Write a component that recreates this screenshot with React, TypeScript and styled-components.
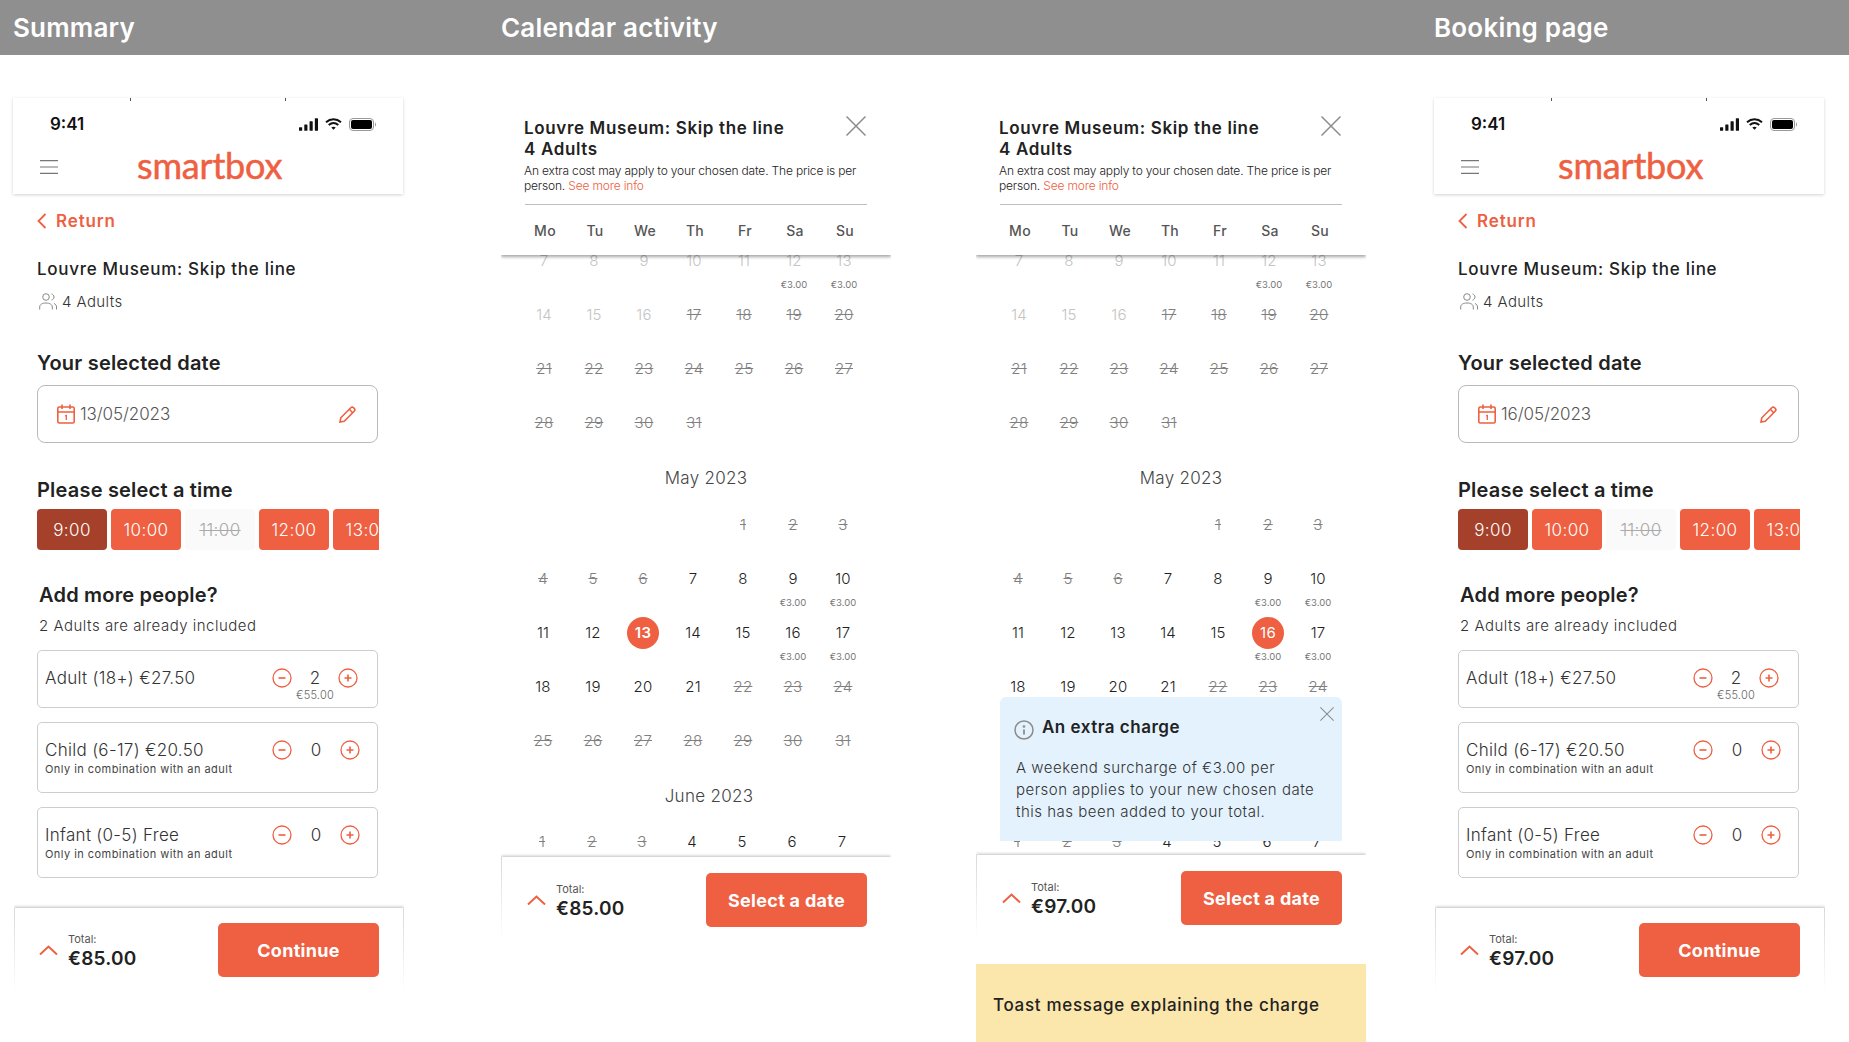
import React from "react";
import styled, { createGlobalStyle } from "styled-components";

const ORANGE = "#ee6041";

const Global = createGlobalStyle`
  html, body { margin: 0; padding: 0; background: #fff; }
  body { font-family: Inter, "Liberation Sans", sans-serif; color: #222; overflow: hidden; }
  * { box-sizing: border-box; }
`;

const COLUMNS = "13px 390px 98px 390px 85px 390px 68px 390px 25px";

const Page = styled.div`
  width: 1849px;
  height: 1042px;
  overflow: hidden;
`;
const HeaderBar = styled.header`
  height: 55px;
  background: #8f8f8f;
  display: grid;
  grid-template-columns: ${COLUMNS};
  align-items: center;
`;
const HeaderTitle = styled.h1<{ $col: number }>`
  grid-column: ${(p) => p.$col};
  margin: 0;
  white-space: nowrap;
  color: #fff;
  font-size: 26px;
  font-weight: 600;
  letter-spacing: 0.2px;
`;
const Board = styled.main`
  display: grid;
  grid-template-columns: ${COLUMNS};
  padding-top: 43px;
`;
const Column = styled.section<{ $col: number }>`
  grid-column: ${(p) => p.$col};
  width: 390px;
  position: relative;
`;

/* ---- phone header ---- */
const TopCard = styled.div`
  position: relative;
  height: 96px;
  background: #fff;
  box-shadow: 0 1px 3px rgba(0, 0, 0, 0.18);
  &::before, &::after {
    content: "";
    position: absolute;
    top: 0;
    width: 1px;
    height: 3px;
    background: #555;
  }
  &::before { left: 117px; }
  &::after { left: 272px; }
`;
const StatusBar = styled.div`
  height: 52px;
  padding: 0 27px 0 37px;
  display: flex;
  align-items: center;
  justify-content: space-between;
`;
const Clock = styled.span`
  font-size: 17px;
  font-weight: 600;
  color: #111;
`;
const StatusIcons = styled.div`
  display: flex;
  align-items: center;
  gap: 7px;
`;
const NavBar = styled.div`
  height: 44px;
  padding-left: 27px;
  display: flex;
  align-items: center;
  gap: 79px;
  margin-top: -5px;
`;
const Logo = styled.span`
  font-family: Lato, sans-serif;
  font-size: 36px;
  line-height: 40px;
  font-weight: 400;
  color: ${ORANGE};
  letter-spacing: -0.2px;
  -webkit-text-stroke: 0.5px ${ORANGE};
  margin-top: -4px;
`;

/* ---- summary body ---- */
const Content = styled.div`
  padding: 17px 25px 0 24px;
`;
const ReturnLink = styled.div`
  display: flex;
  align-items: center;
  gap: 9px;
  height: 20px;
  color: ${ORANGE};
  font-size: 17px;
  font-weight: 600;
  letter-spacing: 0.85px;
`;
const ProductTitle = styled.div`
  margin-top: 27px;
  font-size: 17px;
  line-height: 22px;
  font-weight: 500;
  letter-spacing: 0.7px;
  color: #222;
`;
const Guests = styled.div`
  margin-top: 11px;
  padding-left: 2px;
  display: flex;
  align-items: center;
  gap: 5px;
  height: 20px;
  font-size: 15px;
  font-weight: 300;
  letter-spacing: 0.4px;
  color: #333;
`;
const SectionTitle = styled.h2<{ $top: number; $inset?: number }>`
  margin: ${(p) => p.$top}px 0 0 ${(p) => p.$inset ?? 0}px;
  font-size: 20px;
  line-height: 24px;
  font-weight: 600;
  letter-spacing: 0.2px;
  color: #222;
`;
const DateBox = styled.div`
  margin-top: 10px;
  height: 58px;
  border: 1.5px solid #b9b9b9;
  border-radius: 8px;
  padding: 0 21px 0 19px;
  display: flex;
  align-items: center;
  gap: 5px;
  font-size: 17px;
  font-weight: 300;
  letter-spacing: -0.1px;
  color: #555;
`;
const DateValue = styled.span`
  flex: 1;
`;
const TimeStrip = styled.div`
  margin-top: 7px;
  width: 342px;
  display: flex;
  gap: 4px;
  overflow: hidden;
`;
const TimeChip = styled.div<{ $state: "picked" | "open" | "off" }>`
  flex: 0 0 70px;
  height: 41px;
  border-radius: 4px;
  display: flex;
  align-items: center;
  justify-content: center;
  font-size: 17px;
  font-weight: 300;
  letter-spacing: 0.4px;
  overflow: hidden;
  white-space: nowrap;
  background: ${(p) => (p.$state === "picked" ? "#a5412a" : p.$state === "open" ? ORANGE : "#fafafa")};
  color: ${(p) => (p.$state === "off" ? "#aaa" : "#fff")};
  text-decoration: ${(p) => (p.$state === "off" ? "line-through" : "none")};
`;
const AlreadyIncluded = styled.div`
  margin: 9px 0 0 2px;
  font-size: 15px;
  line-height: 20px;
  font-weight: 300;
  letter-spacing: 0.5px;
  color: #333;
`;
const PeopleList = styled.div`
  margin-top: 14px;
  display: flex;
  flex-direction: column;
  gap: 14px;
`;
const PersonRow = styled.div<{ $h: number }>`
  height: ${(p) => p.$h}px;
  border: 1px solid #cdcdcd;
  border-radius: 5px;
  padding: 16px 0 0 7px;
  display: flex;
  justify-content: space-between;
  align-items: flex-start;
`;
const PersonLabel = styled.div`
  font-size: 17px;
  line-height: 22px;
  font-weight: 300;
  letter-spacing: 0.3px;
  color: #333;
`;
const PersonNote = styled.div`
  margin-top: 2px;
  font-size: 11px;
  line-height: 12px;
  font-weight: 400;
  letter-spacing: 0.45px;
  color: #444;
`;
const Stepper = styled.div<{ $right: number }>`
  display: flex;
  align-items: flex-start;
  padding: 1px ${(p) => p.$right}px 0 0;
`;
const CountBox = styled.div<{ $w: number }>`
  width: ${(p) => p.$w}px;
  text-align: center;
  font-size: 17px;
  line-height: 20px;
  font-weight: 300;
  color: #333;
`;
const CountPrice = styled.div`
  margin-top: 1px;
  font-size: 11px;
  line-height: 12px;
  letter-spacing: 0.2px;
  color: #666;
`;

/* ---- total footer ---- */
const Footer = styled.div<{ $modal?: boolean }>`
  width: 390px;
  height: 83px;
  margin-left: ${(p) => (p.$modal ? 0 : 1)}px;
  position: relative;
  z-index: 1;
  background: #fff;
  padding: ${(p) => (p.$modal ? "16px 24px 0 25px" : "15px 24px 0 24px")};
  display: flex;
  align-items: flex-start;
  box-shadow: 0 -1px 3px rgba(0, 0, 0, 0.25);
  clip-path: inset(-6px 0 0 0);
  border-style: solid;
  border-width: 0 ${(p) => (p.$modal ? 0 : 1)}px 0 1px;
  border-image: linear-gradient(#d8d8d8, #fff) 1;
`;
const TotalBlock = styled.div`
  height: 54px;
  padding-top: 3px;
  margin-left: 10px;
  flex: 1;
  display: flex;
  flex-direction: column;
  justify-content: center;
`;
const TotalCaption = styled.div`
  font-size: 11px;
  line-height: 14px;
  color: #555;
`;
const TotalAmount = styled.div`
  font-size: 19px;
  line-height: 26px;
  font-weight: 600;
  letter-spacing: 0.25px;
  color: #222;
`;
const CTA = styled.div`
  width: 161px;
  height: 54px;
  border-radius: 5px;
  background: ${ORANGE};
  color: #fff;
  display: flex;
  align-items: center;
  justify-content: center;
  font-size: 18px;
  font-weight: 700;
  letter-spacing: 0.3px;
`;
const ChevronWrap = styled.div`
  height: 54px;
  display: flex;
  align-items: center;
`;

/* ---- calendar ---- */
const ModalHead = styled.div`
  position: relative;
  z-index: 1;
  height: 157px;
  background: #fff;
  padding: 20px 24px 0 23px;
  box-shadow: 0 2px 3px rgba(0, 0, 0, 0.35);
  clip-path: inset(0 0 -8px 0);
`;
const ModalTitle = styled.div`
  font-size: 17px;
  line-height: 21px;
  font-weight: 600;
  letter-spacing: 0.65px;
  color: #222;
`;
const CloseButton = styled.div`
  position: absolute;
  top: 18px;
  right: 25px;
  width: 20px;
  height: 20px;
`;
const ModalNote = styled.div`
  margin-top: 3px;
  font-size: 12px;
  line-height: 15px;
  font-weight: 300;
  letter-spacing: -0.17px;
  color: #222;
  white-space: nowrap;
`;
const InfoLink = styled.span`
  color: ${ORANGE};
`;
const Rule = styled.div`
  margin: 11px 0 0 1px;
  height: 1px;
  background: #bfbfbf;
`;
const WeekHead = styled.div`
  margin: 17px 0 0 -4px;
  width: 350px;
  display: grid;
  grid-template-columns: repeat(7, 50px);
  font-size: 14px;
  line-height: 18px;
  font-weight: 500;
  letter-spacing: 0.3px;
  color: #555;
  text-align: center;
`;
const ScrollArea = styled.div<{ $h: number }>`
  height: ${(p) => p.$h}px;
  overflow: hidden;
`;
const ScrollInner = styled.div`
  margin-top: -4px;
`;
const MonthTitle = styled.div<{ $shift: number; $gap: number }>`
  width: 350px;
  margin-left: ${(p) => p.$shift}px;
  margin-bottom: ${(p) => p.$gap}px;
  height: 22px;
  line-height: 22px;
  text-align: center;
  font-size: 17px;
  font-weight: 300;
  letter-spacing: 0.3px;
  color: #444;
`;
const MonthGrid = styled.div<{ $shift: number }>`
  width: 350px;
  margin-left: ${(p) => p.$shift}px;
  display: grid;
  grid-template-columns: repeat(7, 50px);
  grid-auto-rows: 54px;
`;
const DayCell = styled.div`
  display: flex;
  flex-direction: column;
  align-items: center;
`;
const DayNumber = styled.span<{ $tone: Tone }>`
  position: relative;
  z-index: 0;
  height: 20px;
  line-height: 20px;
  font-size: 15px;
  font-weight: ${(p) => (p.$tone === "selected" ? 600 : p.$tone === "chosen" ? 400 : 300)};
  letter-spacing: 0.2px;
  color: ${(p) =>
    p.$tone === "faded"
      ? "#c4c4c4"
      : p.$tone === "strike"
      ? "#808080"
      : p.$tone === "selected" || p.$tone === "chosen"
      ? "#fff"
      : "#222"};
  text-decoration: ${(p) => (p.$tone === "strike" ? "line-through" : "none")};
  ${(p) =>
    p.$tone === "selected" || p.$tone === "chosen"
      ? `&::before {
          content: "";
          position: absolute;
          z-index: -1;
          left: 50%;
          top: 50%;
          width: 32px;
          height: 32px;
          margin: -16px 0 0 -16px;
          border-radius: 50%;
          background: ${ORANGE};
        }`
      : ""}
`;
const DaySurcharge = styled.span`
  margin-top: 8px;
  font-size: 9.5px;
  line-height: 12px;
  font-weight: 400;
  color: #777;
`;
const InfoBox = styled.div`
  position: absolute;
  z-index: 1;
  left: 24px;
  top: 599px;
  width: 342px;
  height: 144px;
  background: #e3f2fd;
  border-radius: 6px 6px 0 0;
  padding: 17px 14px 0 16px;
`;
const InfoHeading = styled.div`
  display: flex;
  align-items: center;
  gap: 8px;
  margin-left: -2px;
  font-size: 17px;
  line-height: 24px;
  font-weight: 600;
  letter-spacing: 0.5px;
  color: #222;
`;
const InfoClose = styled.div`
  position: absolute;
  top: 8px;
  right: 8px;
  width: 14px;
  height: 14px;
`;
const InfoText = styled.div`
  margin-top: 17px;
  font-size: 15px;
  line-height: 22px;
  font-weight: 300;
  letter-spacing: 0.5px;
  color: #333;
  white-space: nowrap;
`;
const Toast = styled.div`
  margin-top: 26px;
  height: 78px;
  background: #fbe6ac;
  padding: 3px 0 0 17px;
  display: flex;
  align-items: center;
  font-size: 17px;
  font-weight: 500;
  letter-spacing: 0.7px;
  color: #222;
`;
const FooterSpacer = styled.div`
  height: 30px;
`;

type Tone = "faded" | "strike" | "normal" | "selected" | "chosen";
type Day = { n: number; tone: Tone; fee?: boolean } | null;

const day = (n: number, tone: Tone, fee?: boolean): Day => ({ n, tone, fee });

const april = (): Day[] => [
  ...[7, 8, 9, 10, 11].map((n) => day(n, "faded")),
  day(12, "faded", true),
  day(13, "faded", true),
  ...[14, 15, 16].map((n) => day(n, "faded")),
  ...[17, 18, 19, 20, 21, 22, 23, 24, 25, 26, 27, 28, 29, 30, 31].map((n) => day(n, "strike")),
];
const may = (selected: number, tone: Tone): Day[] => {
  const out: Day[] = [null, null, null, null];
  for (let n = 1; n <= 31; n++) {
    const fee = n === 9 || n === 10 || n === 16 || n === 17;
    out.push(day(n, n === selected ? tone : n <= 6 || n >= 22 ? "strike" : "normal", fee));
  }
  return out;
};
const june = (): Day[] => [1, 2, 3, 4, 5, 6, 7].map((n) => day(n, n <= 3 ? "strike" : "normal"));

function Month({ days, shift }: { days: Day[]; shift: number }) {
  return (
    <MonthGrid $shift={shift}>
      {days.map((d, i) => (
        <DayCell key={i}>
          {d && <DayNumber $tone={d.tone}>{d.n}</DayNumber>}
          {d?.fee && <DaySurcharge>€3.00</DaySurcharge>}
        </DayCell>
      ))}
    </MonthGrid>
  );
}

const CrossIcon = ({ size, color }: { size: number; color: string }) => (
  <svg width={size} height={size} viewBox="0 0 20 20" fill="none" stroke={color} strokeWidth="1.5">
    <path d="M0.5 0.5 19.5 19.5M19.5 0.5 0.5 19.5" />
  </svg>
);
const UpChevron = () => (
  <svg width="19" height="10" viewBox="0 0 19 10" fill="none" stroke={ORANGE} strokeWidth="2">
    <path d="M1 9.5 9.5 1.5 18 9.5" />
  </svg>
);
const RoundButton = ({ plus }: { plus?: boolean }) => (
  <svg width="20" height="20" viewBox="0 0 20 20" fill="none" stroke={ORANGE} strokeWidth="1.3">
    <circle cx="10" cy="10" r="9" />
    <path d={plus ? "M6.5 10h7M10 6.5v7" : "M6.5 10h7"} strokeWidth="1.6" />
  </svg>
);
const StatusGlyphs = () => (
  <StatusIcons>
    <svg width="19" height="13" viewBox="0 0 18 12" fill="#111">
      <rect x="0" y="8.5" width="3" height="3.5" rx=".5" />
      <rect x="5" y="6" width="3" height="6" rx=".5" />
      <rect x="10" y="3" width="3" height="9" rx=".5" />
      <rect x="15" y="0" width="3" height="12" rx=".5" />
    </svg>
    <svg width="17" height="12" viewBox="0 0 17 12" fill="none" stroke="#111" strokeWidth="2">
      <path d="M1 4.2C5.4.3 11.6.3 16 4.2" />
      <path d="M3.7 7c2.9-2.5 6.7-2.5 9.6 0" />
      <path d="M8.5 11.8 6.3 9.5c1.3-1 3.1-1 4.4 0z" fill="#111" stroke="none" />
    </svg>
    <svg width="27" height="13" viewBox="0 0 27 13" fill="none">
      <rect x=".5" y=".5" width="24" height="12" rx="3.5" stroke="#999" />
      <rect x="2" y="2" width="21" height="9" rx="2" fill="#000" />
      <path d="M26 4.5v4c.7-.3 1-1.2 1-2s-.3-1.7-1-2z" fill="#999" />
    </svg>
  </StatusIcons>
);
const MenuIcon = () => (
  <svg width="18" height="14" viewBox="0 0 18 14" stroke="#777" strokeWidth="1.2">
    <path d="M0 .7h18M0 7h18M0 13.3h18" />
  </svg>
);
const BackIcon = () => (
  <svg width="10" height="16" viewBox="0 0 10 16" fill="none" stroke={ORANGE} strokeWidth="1.8">
    <path d="M8.5 1 1.5 8l7 7" />
  </svg>
);
const PeopleIcon = () => (
  <svg width="18" height="17" viewBox="0 0 18 17" fill="none" stroke="#888" strokeWidth="1">
    <circle cx="7" cy="4" r="3.3" />
    <path d="M.7 16.5V14c0-2.500 2.500-4 6.300-4s6.300 1.500 6.300 4v2.500" />
    <path d="M12.500.9c1.600.5 2.500 1.700 2.500 3.100s-.9 2.600-2.500 3.100" />
    <path d="M15 10.500c1.500.6 2.500 1.800 2.500 3.500v2.500" />
  </svg>
);
const CalendarIcon = () => (
  <svg width="18" height="20" viewBox="0 0 18 20" fill="none" stroke={ORANGE} strokeWidth="1.6">
    <rect x=".8" y="3" width="16.4" height="16" rx="1.5" />
    <path d="M.8 8h16.400M5 .5v4.500M13 .5v4.500" />
    <path d="M8 12l1.300-.6v4.600" strokeWidth="1.3" />
  </svg>
);
const PencilIcon = () => (
  <svg width="17" height="17" viewBox="0 0 17 17" fill="none" stroke={ORANGE} strokeWidth="1.6">
    <path d="M1 16l.8-4.200L11.800 1.800c.8-.8 2-.8 2.800 0l.6.600c.8.800.8 2 0 2.800L5.200 15.200z" />
    <path d="M10.300 3.300l3.400 3.400" />
  </svg>
);
const InfoIcon = () => (
  <svg width="20" height="20" viewBox="0 0 20 20" fill="none" stroke="#8b8b8b" strokeWidth="1.5" style={{ marginTop: 6 }}>
    <circle cx="10" cy="10" r="9" />
    <path d="M10 9.500v5" strokeWidth="1.8" />
    <circle cx="10" cy="6.500" r=".6" fill="#8b8b8b" />
  </svg>
);

function Total({ amount, modal, label }: { amount: string; modal?: boolean; label: string }) {
  return (
    <Footer $modal={modal}>
      <ChevronWrap>
        <UpChevron />
      </ChevronWrap>
      <TotalBlock>
        <TotalCaption>Total:</TotalCaption>
        <TotalAmount>{amount}</TotalAmount>
      </TotalBlock>
      <CTA>{label}</CTA>
    </Footer>
  );
}

function Person({
  label,
  note,
  count,
  price,
  h,
  w,
  right,
}: {
  label: string;
  note?: string;
  count: number;
  price?: string;
  h: number;
  w: number;
  right: number;
}) {
  return (
    <PersonRow $h={h}>
      <div>
        <PersonLabel>{label}</PersonLabel>
        {note && <PersonNote>{note}</PersonNote>}
      </div>
      <Stepper $right={right}>
        <RoundButton />
        <CountBox $w={w}>
          {count}
          {price && <CountPrice>{price}</CountPrice>}
        </CountBox>
        <RoundButton plus />
      </Stepper>
    </PersonRow>
  );
}

function Summary({ date, total, col }: { date: string; total: string; col: number }) {
  return (
    <Column $col={col}>
      <TopCard>
        <StatusBar>
          <Clock>9:41</Clock>
          <StatusGlyphs />
        </StatusBar>
        <NavBar>
          <MenuIcon />
          <Logo>smartbox</Logo>
        </NavBar>
      </TopCard>
      <Content>
        <ReturnLink>
          <BackIcon />
          Return
        </ReturnLink>
        <ProductTitle>Louvre Museum: Skip the line</ProductTitle>
        <Guests>
          <PeopleIcon />4 Adults
        </Guests>
        <SectionTitle $top={40}>Your selected date</SectionTitle>
        <DateBox>
          <CalendarIcon />
          <DateValue>{date}</DateValue>
          <PencilIcon />
        </DateBox>
        <SectionTitle $top={35}>Please select a time</SectionTitle>
        <TimeStrip>
          <TimeChip $state="picked">9:00</TimeChip>
          <TimeChip $state="open">10:00</TimeChip>
          <TimeChip $state="off">11:00</TimeChip>
          <TimeChip $state="open">12:00</TimeChip>
          <TimeChip $state="open">13:00</TimeChip>
        </TimeStrip>
        <SectionTitle $top={33} $inset={2}>
          Add more people?
        </SectionTitle>
        <AlreadyIncluded>2 Adults are already included</AlreadyIncluded>
        <PeopleList>
          <Person label="Adult (18+) €27.50" count={2} price="€55.00" h={58} w={46} right={19} />
          <Person label="Child (6-17) €20.50" note="Only in combination with an adult" count={0} h={71} w={48} right={17} />
          <Person label="Infant (0-5) Free" note="Only in combination with an adult" count={0} h={71} w={48} right={17} />
        </PeopleList>
      </Content>
      <FooterSpacer />
      <Total amount={total} label="Continue" />
    </Column>
  );
}

function Calendar({
  col,
  selected,
  tone,
  total,
  listHeight,
  children,
}: {
  col: number;
  selected: number;
  tone: Tone;
  total: string;
  listHeight: number;
  children?: React.ReactNode;
}) {
  return (
    <Column $col={col}>
      <ModalHead>
        <ModalTitle>
          Louvre Museum: Skip the line
          <br />4 Adults
        </ModalTitle>
        <CloseButton>
          <CrossIcon size={20} color="#8d8d8d" />
        </CloseButton>
        <ModalNote>
          An extra cost may apply to your chosen date. The price is per
          <br />
          person. <InfoLink>See more info</InfoLink>
        </ModalNote>
        <Rule />
        <WeekHead>
          {["Mo", "Tu", "We", "Th", "Fr", "Sa", "Su"].map((d) => (
            <span key={d}>{d}</span>
          ))}
        </WeekHead>
      </ModalHead>
      <ScrollArea $h={listHeight}>
        <ScrollInner>
          <Month days={april()} shift={18} />
          <MonthTitle $shift={30} $gap={26}>
            May 2023
          </MonthTitle>
          <Month days={may(selected, tone)} shift={17} />
          <MonthTitle $shift={33} $gap={25}>
            June 2023
          </MonthTitle>
          <Month days={june()} shift={16} />
        </ScrollInner>
      </ScrollArea>
      <Total amount={total} label="Select a date" modal />
      {children}
    </Column>
  );
}

export default function App() {
  return (
    <Page>
      <Global />
      <HeaderBar>
        <HeaderTitle $col={2}>Summary</HeaderTitle>
        <HeaderTitle $col={4}>Calendar activity</HeaderTitle>
        <HeaderTitle $col={8}>Booking page</HeaderTitle>
      </HeaderBar>
      <Board>
        <Summary col={2} date="13/05/2023" total="€85.00" />
        <Calendar col={4} selected={13} tone="selected" total="€85.00" listHeight={602} />
        <Calendar col={6} selected={16} tone="chosen" total="€97.00" listHeight={600}>
          <InfoBox>
            <InfoClose>
              <CrossIcon size={14} color="#8d8d8d" />
            </InfoClose>
            <InfoHeading>
              <InfoIcon />
              An extra charge
            </InfoHeading>
            <InfoText>
              A weekend surcharge of €3.00 per
              <br />
              person applies to your new chosen date
              <br />
              this has been added to your total.
            </InfoText>
          </InfoBox>
          <Toast>Toast message explaining the charge</Toast>
        </Calendar>
        <Summary col={8} date="16/05/2023" total="€97.00" />
      </Board>
    </Page>
  );
}
